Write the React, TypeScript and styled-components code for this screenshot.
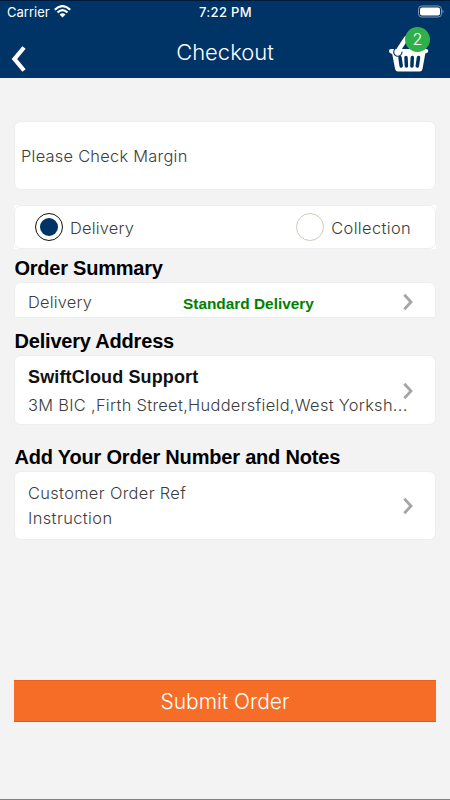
import React from "react";
import styled, { createGlobalStyle } from "styled-components";

const GlobalStyle = createGlobalStyle`
  * { box-sizing: border-box; }
  body { margin: 0; background: #f3f3f3; }
`;

const Screen = styled.div`
  display: flex;
  flex-direction: column;
  width: 450px;
  height: 800px;
  overflow: hidden;
  background: #f3f3f3;
  border-bottom: 1px solid #808080;
  font-family: Inter, "Liberation Sans", sans-serif;
`;

const Header = styled.header`
  height: 78px;
  background: #003366;
  border-top: 1px solid #001938;
  color: #fff;
`;

const StatusBar = styled.div`
  display: grid;
  grid-template-columns: 1fr auto 1fr;
  height: 21px;
  align-items: center;
  padding: 0 6px 0 7px;
`;

const Carrier = styled.div`
  display: flex;
  align-items: center;
  gap: 4px;
`;

const Battery = styled.svg`
  justify-self: end;
`;

const NavBar = styled.div`
  display: grid;
  grid-template-columns: 100px 1fr 100px;
  height: 56px;
`;

const BackButton = styled.button`
  display: flex;
  padding: 24px 0 0 10px;
  border: 0;
  background: none;
`;

const Title = styled.h1`
  margin: 0;
  padding-top: 15px;
  text-align: center;
  line-height: 0;
`;

const Basket = styled.div`
  position: relative;
  padding: 14px 0 0 38px;
`;

const Badge = styled.span`
  position: absolute;
  left: 55px;
  top: 5px;
  width: 25px;
  height: 25px;
  border-radius: 50%;
  background: #2fb04b;
  text-align: center;
`;

const Text = styled.span<{
  $size?: number;
  $weight?: number;
  $spacing?: number;
  $line?: number;
  $color?: string;
}>`
  display: inline-block;
  white-space: nowrap;
  font-size: ${(p) => p.$size ?? 16.4}px;
  font-weight: ${(p) => p.$weight ?? 300};
  letter-spacing: ${(p) => p.$spacing ?? 0}px;
  line-height: ${(p) => p.$line ?? 24}px;
  color: ${(p) => p.$color ?? "#3c3c3c"};
`;

const Strong = styled(Text)`
  font-family: "Liberation Sans", Arial, sans-serif;
  font-weight: 700;
`;

const Content = styled.main`
  display: flex;
  flex-direction: column;
  padding: 43px 14px 0;
`;

const Card = styled.section<{ $height: number; $flat?: boolean; $pad?: number }>`
  display: flex;
  align-items: center;
  height: ${(p) => p.$height}px;
  padding: 0 21px 0 ${(p) => p.$pad ?? 13}px;
  background: #fff;
  border: 1px solid #eeeeee;
  border-radius: ${(p) => (p.$flat ? "7px 7px 0 0" : "7px")};
`;

const OptionsFrame = styled.div`
  margin: 15px 0 7px;
  background: #fff;
`;

const Option = styled.label`
  display: flex;
  align-items: center;
  gap: 7px;
  & > ${Text} {
    padding-top: 1px;
  }
`;

const Options = styled(Card)`
  justify-content: space-between;
  padding: 0 24px 0 20px;
`;

const Radio = styled.span<{ $checked?: boolean }>`
  display: grid;
  place-items: center;
  width: 28px;
  height: 28px;
  border: 1px solid ${(p) => (p.$checked ? "#111" : "#ccccbf")};
  border-radius: 50%;
  &::after {
    content: "";
    width: 18px;
    height: 18px;
    border-radius: 50%;
    background: ${(p) => (p.$checked ? "#003366" : "transparent")};
  }
`;

const Heading = styled.h2<{ $top?: number; $bottom?: number }>`
  display: flex;
  height: 24px;
  margin: ${(p) => p.$top ?? 0}px 0 ${(p) => p.$bottom ?? 2}px 0.5px;
`;

const Lines = styled.div<{ $gap?: number }>`
  display: flex;
  flex: 1;
  min-width: 0;
  flex-direction: column;
  gap: ${(p) => p.$gap ?? 0}px;
`;

const SummaryRow = styled.div`
  display: grid;
  grid-template-columns: 155px 1fr;
  flex: 1;
  align-items: end;
  padding-top: 4px;
`;

const MethodName = styled(Strong)`
  padding-top: 3px;
  line-height: 21px;
`;

const ChevronSlot = styled.span<{ $drop?: number }>`
  display: flex;
  width: 12px;
  margin-left: -12px;
  padding-top: ${(p) => p.$drop ?? 2}px;
`;

const Submit = styled.button`
  height: 42px;
  margin: 140px 0 0;
  padding: 1px 0 0;
  border: 0;
  border-top: 1px solid #f45f17;
  border-bottom: 1px solid #f4520c;
  background: #f56d26;
  font-family: inherit;
`;

const Chevron = ({ drop }: { drop?: number }) => (
  <ChevronSlot $drop={drop}>
    <svg width="12" height="18" viewBox="0 0 12 18" fill="none">
      <path d="M2.3 1.8 L9 9 L2.3 16.2" stroke="#a6a6a6" strokeWidth="2.8" />
    </svg>
  </ChevronSlot>
);

const WifiIcon = () => (
  <svg width="17" height="13" viewBox="0 0 17 13" fill="none" stroke="#fff">
    <path d="M0.8 4.7 Q8.5 -2.5 16.2 4.7" strokeWidth="2.2" />
    <path d="M3.5 7.6 Q8.5 2.8 13.5 7.6" strokeWidth="2.1" />
    <path d="M5.5 9.6 Q8.5 7 11.5 9.6 L8.5 12.5Z" fill="#fff" stroke="none" />
  </svg>
);

const BasketIcon = () => (
  <svg width="42" height="36" viewBox="0 0 42 36" fill="none">
    <path d="M3 13 H38 Q40.5 13 40.3 15 Q40 17 37.3 17.5 L34.5 33 Q34 35.5 31.5 35.5 H10 Q7.6 35.5 7.1 33 L4.2 18 Q1 17.2 1 15 Q1 13 3 13Z" fill="#fff" />
    <path d="M12 21.5 L13.2 30 M18 21.5 L18.4 30 M24.3 21.5 L23.9 30 M30.5 21.5 L29.3 30" stroke="#003366" strokeWidth="3.5" strokeLinecap="round" />
    <path d="M7.2 12.8 A4.2 4.2 0 1 0 14 15.6" stroke="#003366" strokeWidth="1.1" />
    <path d="M18 2.5 L10.5 14" stroke="#fff" strokeWidth="4.6" strokeLinecap="round" />
  </svg>
);

export default function App() {
  return (
    <Screen>
      <GlobalStyle />
      <Header>
        <StatusBar>
          <Carrier>
            <Text $size={13} $weight={400} $line={20} $color="#fff">Carrier</Text>
            <WifiIcon />
          </Carrier>
          <Text $size={13} $weight={500} $line={20} $spacing={0.35} $color="#fff">7:22 PM</Text>
          <Battery width="27" height="13" viewBox="0 0 27 13" fill="none">
            <rect x="1.5" y="1" width="23" height="11" rx="3.2" stroke="#8398b2" />
            <rect x="3" y="2.5" width="20" height="8" rx="2" fill="#fff" />
            <path d="M25.5 4.5 Q27.5 6.5 25.5 8.5Z" fill="#8398b2" />
          </Battery>
        </StatusBar>
        <NavBar>
          <BackButton aria-label="Back">
            <svg width="18" height="26" viewBox="0 0 18 26" fill="none">
              <path d="M14 1.5 L4.5 13 L14 24.5" stroke="#fff" strokeWidth="4.3" />
            </svg>
          </BackButton>
          <Title>
            <Text $size={22} $line={30} $color="#fff">Checkout</Text>
          </Title>
          <Basket>
            <BasketIcon />
            <Badge>
              <Text $size={16} $line={25} $color="#fff">2</Text>
            </Badge>
          </Basket>
        </NavBar>
      </Header>
      <Content>
        <Card $height={69} $pad={6}>
          <Text $spacing={0.26}>Please Check Margin</Text>
        </Card>
        <OptionsFrame>
          <Options $height={44}>
            <Option>
              <Radio $checked />
              <Text $spacing={0.2}>Delivery</Text>
            </Option>
            <Option>
              <Radio />
              <Text $spacing={0.37}>Collection</Text>
            </Option>
          </Options>
        </OptionsFrame>
        <Heading>
          <Strong $size={20} $spacing={-0.24} $color="#000">Order Summary</Strong>
        </Heading>
        <Card $height={36} $flat>
          <SummaryRow>
            <Text $spacing={0.2}>Delivery</Text>
            <MethodName $size={15.4} $color="#008000">Standard Delivery</MethodName>
          </SummaryRow>
          <Chevron drop={4} />
        </Card>
        <Heading $top={11}>
          <Strong $size={20} $spacing={-0.2} $color="#000">Delivery Address</Strong>
        </Heading>
        <Card $height={70}>
          <Lines $gap={3}>
            <Strong $size={18} $line={26} $spacing={0.13} $color="#111">SwiftCloud Support</Strong>
            <Text $spacing={0.31}>3M BIC ,Firth Street,Huddersfield,West Yorksh...</Text>
          </Lines>
          <Chevron />
        </Card>
        <Heading $top={20}>
          <Strong $size={20} $spacing={-0.19} $color="#000">Add Your Order Number and Notes</Strong>
        </Heading>
        <Card $height={69}>
          <Lines $gap={1}>
            <Text $spacing={0.34}>Customer Order Ref</Text>
            <Text $spacing={0.4}>Instruction</Text>
          </Lines>
          <Chevron drop={0} />
        </Card>
        <Submit>
          <Text $size={21} $line={38} $color="#fff">Submit Order</Text>
        </Submit>
      </Content>
    </Screen>
  );
}
